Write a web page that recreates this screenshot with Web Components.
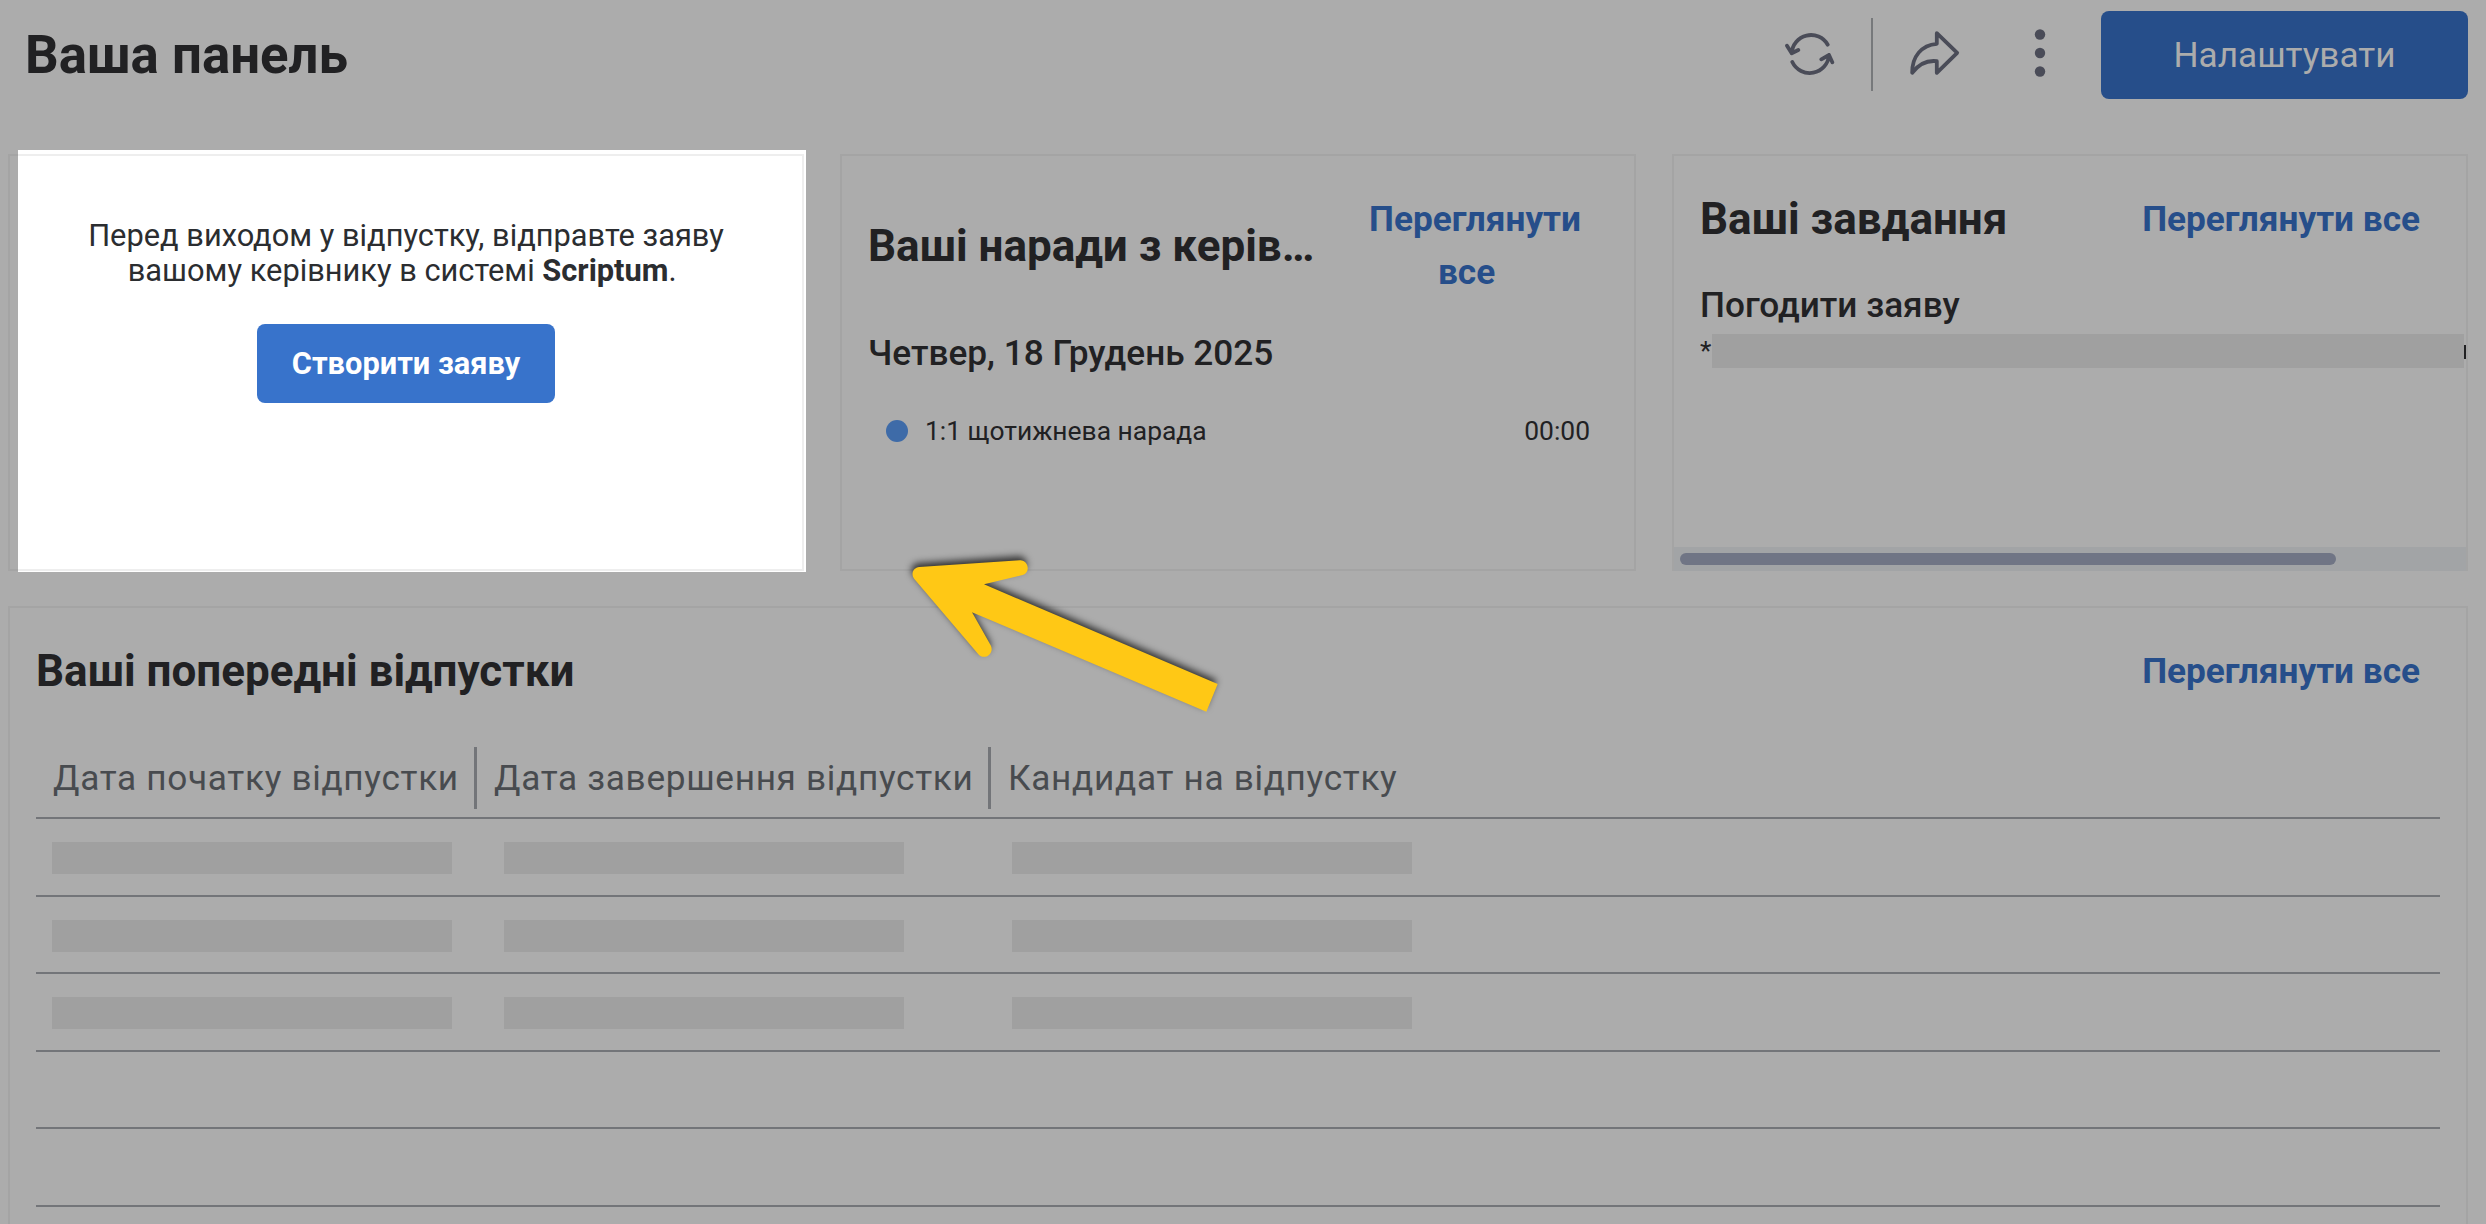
<!DOCTYPE html>
<html lang="uk">
<head>
<meta charset="utf-8">
<title>Ваша панель</title>
<style>
  html, body { margin: 0; }
  body { width: 2486px; height: 1224px; overflow: hidden; background: #acacac; color: #212123; font-family: Roboto, "Noto Sans", sans-serif; }
</style>
</head>
<body>
<dash-page></dash-page>
<script>
const define = (name, css, html) => {
  const t = document.createElement('template');
  t.innerHTML = `<style>*{box-sizing:border-box}${css}</style>${html}`;
  customElements.define(name, class extends HTMLElement {
    constructor() {
      super();
      this.attachShadow({ mode: 'open' }).append(t.content.cloneNode(true));
    }
  });
};

define('dash-toolbar', `
  :host { display: flex; align-items: flex-start; justify-content: space-between; height: 154px; padding: 11px 18px 0 25px; box-sizing: border-box; }
  h1 { margin: 14px 0 0; font-size: 52.8px; line-height: 60px; font-weight: 700; white-space: nowrap; }
  .tools { display: flex; align-items: center; height: 86px; }
  svg { display: block; fill: none; stroke: #4a4c58; stroke-width: 3.8; stroke-linecap: round; stroke-linejoin: round; }
  .sep { width: 2px; height: 73px; background: #77797b; margin: 0 37px 0 36px; }
  .dots { margin-left: 74px; fill: #4a4c58; stroke: none; }
  button { all: unset; box-sizing: border-box; align-self: flex-start; width: 367px; height: 88px; margin-left: 55px; border-radius: 8px; background: #264e8a; color: #acacac; text-align: center; font-size: 35.2px; line-height: 84px; }
`, `
  <h1>Ваша панель</h1>
  <div class="tools">
    <svg width="50" height="46" viewBox="1785 31 50 46"><path d="M1827.700 44.700A19.300 19.300 0 0 0 1791.700 53.300M1787 45.700L1791.700 53.300L1798.300 50M1792.300 62A19.300 19.300 0 0 0 1829 55M1821.300 59.300L1829 55L1832.300 62.300"/></svg>
    <div class="sep"></div>
    <svg width="50" height="46" viewBox="1910.500 31.500 50 46"><path d="M1937.300 33.700L1957.700 53.300L1937.300 73.300V61.700C1927 60.500 1919 65 1912.700 73.300C1912.500 57 1922 45.500 1937.300 44.300Z"/></svg>
    <svg class="dots" width="12" height="50" viewBox="0 0 12 50"><circle cx="6" cy="5.500" r="5.200"/><circle cx="6" cy="24" r="5.200"/><circle cx="6" cy="42.500" r="5.200"/></svg>
    <button>Налаштувати</button>
  </div>
`);

define('dash-card', `
  :host { display: flex; flex-direction: column; border: 2px solid #a4a4a4; box-sizing: border-box; min-width: 0; padding: 0 28px 0 26px; }
  .head { display: flex; align-items: center; justify-content: space-between; padding: 36px 18px 0 0; }
  .title { font-size: 44px; line-height: 54px; font-weight: 700; white-space: nowrap; }
  .more { color: #264e8a; font-size: 35.2px; line-height: 53px; font-weight: 700; text-align: center; }
`, `<div class="head"><div class="title"><slot name="title"></slot></div><div class="more"><slot name="more"></slot></div></div><slot></slot>`);

define('leave-card', `
  :host { display: flex; flex-direction: column; align-items: center; box-sizing: border-box; border: 2px solid #a4a4a4; position: relative; color: #2b2d30; }
  .glow { position: absolute; left: 8px; top: -6px; width: 788px; height: 422px; background: #fff; }
  .glow::after { content: ""; position: absolute; left: 0; top: 4px; right: 2px; bottom: 1px; border: 2px solid #eee; border-left: 0; }
  p { position: relative; margin: 62px 0 0; font-size: 30.8px; line-height: 35px; text-align: center; white-space: nowrap; }
  button { all: unset; position: relative; box-sizing: border-box; width: 298px; height: 79px; margin-top: 36px; border-radius: 8px; background: #3873cb; color: #fff; font-size: 30.8px; line-height: 78px; font-weight: 700; text-align: center; }
`, `<div class="glow"></div><p>Перед виходом у відпустку, відправте заяву<br>вашому керівнику в системі <b>Scriptum</b>.&nbsp;</p><button>Створити заяву</button>`);

define('meeting-list', `
  :host { display: block; }
  .date { font-size: 35.2px; line-height: 42px; font-weight: 500; margin-top: 33px; white-space: nowrap; }
  .row { display: flex; align-items: center; margin-top: 40px; padding: 0 16px 0 18px; height: 34px; font-size: 26.4px; }
  i { width: 22px; height: 22px; border-radius: 50%; background: #3e6ba8; margin-right: 17px; }
  time { margin-left: auto; }
`, `<div class="date">Четвер, 18 Грудень 2025</div><div class="row"><i></i><span>1:1 щотижнева нарада</span><time>00:00</time></div>`);

define('task-list', `
  :host { display: flex; flex-direction: column; flex: 1; margin: 0 -28px -2px -26px; }
  .task { font-size: 35.2px; line-height: 42px; font-weight: 500; margin: 38px 0 0 26px; white-space: nowrap; }
  .row { display: flex; margin: 8px 0 0 26px; height: 34px; overflow: hidden; font-size: 26.4px; line-height: 34px; }
  .row span { width: 12px; }
  .mask { width: 752px; height: 34px; background: #a0a0a0; }
  .cut { width: 2px; height: 14px; margin-top: 11px; background: #212123; }
  .track { display: flex; align-items: center; height: 24px; margin-top: auto; padding: 0 6px; background: #a2a4a6; }
  .thumb { width: 656px; height: 12px; border-radius: 6px; background: #707585; }
`, `<div class="task">Погодити заяву</div><div class="row"><span>*</span><div class="mask"></div><div class="cut"></div></div><div class="track"><div class="thumb"></div></div>`);

define('leave-table', `
  :host { display: block; margin-right: -2px; }
  .r { display: grid; grid-template-columns: 441px 514px 1fr; height: 77.6px; border-bottom: 2px solid #737579; align-items: center; }
  .h { height: 80px; margin-top: 41px; font-size: 35.2px; line-height: 40px; letter-spacing: .68px; color: #484b4f; white-space: nowrap; }
  .h > div { height: 62px; padding: 11px 0 0 17px; border-right: 3px solid #737579; }
  .h > div + div { padding-left: 17px; }
  .h > div:last-child { border: 0; }
  i { display: block; width: 400px; height: 32px; background: #a0a0a0; margin: 3px 0 0 16px; }
  i + i { margin-left: 27px; }
  i + i + i { margin-left: 21px; }
`, `<div class="r h"><div>Дата початку відпустки</div><div>Дата завершення відпустки</div><div>Кандидат на відпустку</div></div>
  <div class="r"><i></i><i></i><i></i></div><div class="r"><i></i><i></i><i></i></div><div class="r"><i></i><i></i><i></i></div>
  <div class="r"></div><div class="r"></div>`);

define('pointer-arrow', `
  :host { position: absolute; left: 880px; top: 530px; width: 360px; height: 200px; }
  svg { display: block; overflow: visible; filter: drop-shadow(-1px -4px 3.500px rgba(0,0,0,.7)); }
`, `<svg width="360" height="200" viewBox="0 0 1080 600"><path fill="#ffc815" d="M118 111L420 91C445 90 453 128 428 135L312 163L1013 462L979 545L276 247L332 346C345 370 313 393 295 373L103 147C91 132 100 112 118 111Z"/></svg>`);

define('dash-page', `
  :host { display: block; position: relative; width: 2486px; height: 1224px; overflow: hidden; }
  .cards { display: grid; grid-template-columns: repeat(3, 796px); column-gap: 36px; height: 417px; padding-left: 8px; }
  .meet { padding-top: 1px; }
  .meet b { display: block; font-weight: 700; padding-right: 7px; }
  .meet b + b { padding-right: 24px; }
  .table { margin: 35px 18px 0 8px; height: 640px; }
`, `
  <dash-toolbar></dash-toolbar>
  <div class="cards">
    <leave-card></leave-card>
    <dash-card class="meet"><span slot="title">Ваші наради з керів…</span><span slot="more"><b>Переглянути</b><b>все</b></span><meeting-list></meeting-list></dash-card>
    <dash-card><span slot="title">Ваші завдання</span><span slot="more">Переглянути все</span><task-list></task-list></dash-card>
  </div>
  <dash-card class="table"><span slot="title">Ваші попередні відпустки</span><span slot="more">Переглянути все</span><leave-table></leave-table></dash-card>
  <pointer-arrow></pointer-arrow>
`);
</script>
</body>
</html>
